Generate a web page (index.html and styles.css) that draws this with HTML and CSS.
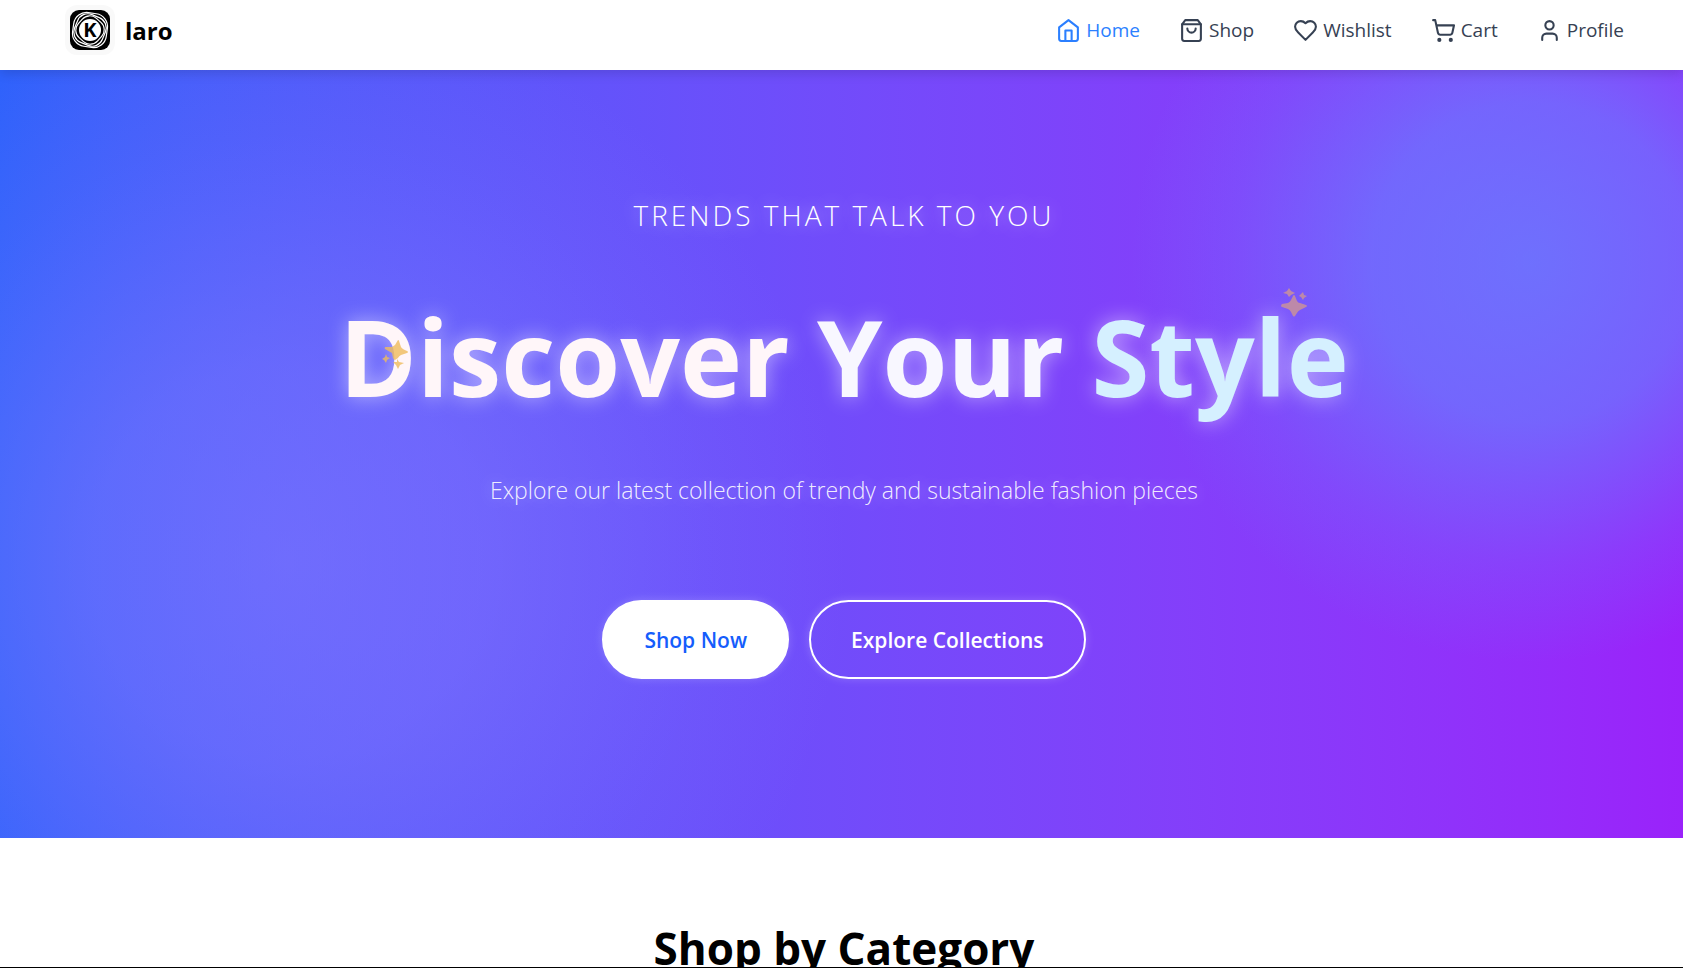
FILE: index.html
```html
<!doctype html>
<html lang="en">
<head>
	<meta charset="UTF-8">
	<meta name="viewport" content="width=device-width, initial-scale=1">
	<title>Klaro</title>
	<link rel="stylesheet" href="styles.css">
</head>
<body>
	<div class="page">
		<header class="navbar">
			<a href="#" class="brand">
				<span class="logo">
					<svg viewBox="0 0 40 40" width="40" height="40" aria-hidden="true">
						<rect width="40" height="40" rx="9" fill="#000"/>
						<g fill="none" stroke="#fff" stroke-width="1.2">
							<rect x="3" y="3" width="34" height="34" rx="13" transform="rotate(8 20 20)"/>
							<rect x="5" y="5" width="30" height="30" rx="11" transform="rotate(22 20 20)"/>
							<rect x="7" y="7" width="26" height="26" rx="10" transform="rotate(42 20 20)"/>
						</g>
						<circle cx="20" cy="20" r="11" fill="#fff"/>
						<text x="20" y="27" text-anchor="middle" class="logo-letter">K</text>
					</svg>
				</span>
				<span class="brand-name">laro</span>
			</a>
			<nav class="nav-links">
				<a href="#" class="active">
					<svg class="icon" viewBox="0 0 24 24"><path d="M3 9l9-7 9 7v11a2 2 0 0 1-2 2H5a2 2 0 0 1-2-2z"/><path d="M9 22V12h6v10"/></svg>
					<span>Home</span>
				</a>
				<a href="#">
					<svg class="icon" viewBox="0 0 24 24"><path d="M6 2 3 6v14a2 2 0 0 0 2 2h14a2 2 0 0 0 2-2V6l-3-4Z"/><path d="M3 6h18"/><path d="M16 10a4 4 0 0 1-8 0"/></svg>
					<span>Shop</span>
				</a>
				<a href="#">
					<svg class="icon" viewBox="0 0 24 24"><path d="M19 14c1.490-1.460 3-3.210 3-5.500A5.500 5.500 0 0 0 16.500 3c-1.760 0-3 .5-4.500 2-1.500-1.500-2.740-2-4.500-2A5.500 5.500 0 0 0 2 8.500c0 2.300 1.500 4.050 3 5.500l7 7Z"/></svg>
					<span>Wishlist</span>
				</a>
				<a href="#">
					<svg class="icon" viewBox="0 0 24 24"><circle cx="8" cy="21" r="1"/><circle cx="19" cy="21" r="1"/><path d="M2.050 2.050h2l2.660 12.420a2 2 0 0 0 2 1.580h9.780a2 2 0 0 0 1.950-1.570l1.650-7.430H5.120"/></svg>
					<span>Cart</span>
				</a>
				<a href="#">
					<svg class="icon" viewBox="0 0 24 24"><path d="M19 21v-2a4 4 0 0 0-4-4H9a4 4 0 0 0-4 4v2"/><circle cx="12" cy="7" r="4"/></svg>
					<span>Profile</span>
				</a>
			</nav>
		</header>

		<section class="hero">
			<p class="tagline">Trends that talk to you</p>
			<h1 class="title">
				<span class="word-one">Discover</span>
				<span class="word-two">Your</span>
				<span class="word-three">Style</span>
				<svg class="sparkle sparkle-left" viewBox="0 0 26 28"><path d="M16 0q1 0 1 1l2 6q1 2 6 4 2 1 0 2l-6 2q-2 1-3 3l-3 2q-1 0-2-2l-1-5-7-4q-1-2 1-2l6 0 3-2z"/><path d="M4 14l1 3 3 1-3 2-1 3-2-3-2-1 3-2z"/><path d="M15 19l2 3 5 1-4 2-2 4-2-4-3-3 4 0z"/></svg>
				<svg class="sparkle sparkle-right" viewBox="0 0 26 28"><path d="M12 8q1-2 2 0l2 5q1 2 3 2l6 2q2 1 0 2l-6 3q-2 1-3 3l-2 3q-1 1-2 0l-2-4q-1-2-3-3l-6-2q-2-1 0-3l6-1q2-1 3-3z"/><path d="M8 0l2 3 4 2-4 2-2 2-2-3-4-1 4-2z"/><path d="M22 4l1 3 3 1-3 2-1 2-2-3-2-1 2-2z"/></svg>
			</h1>
			<p class="subtitle">Explore our latest collection of trendy and sustainable fashion pieces</p>
			<div class="actions">
				<button type="button" class="btn btn-primary">Shop Now</button>
				<button type="button" class="btn btn-outline">Explore Collections</button>
			</div>
		</section>

		<section class="categories">
			<h2>Shop by Category</h2>
		</section>
	</div>
</body>
</html>
```

FILE: styles.css
```css
*{
	margin:0;
	padding:0;
	box-sizing:border-box;
}
body{
	font-family:"Open Sans", "Noto Sans", sans-serif;
	background:#fff;
	color:#000;
}
.page{
	height:100vh;
	overflow:hidden;
	border-bottom:1px solid #000;
}

/* navbar */
.navbar{
	position:relative;
	z-index:2;
	display:flex;
	justify-content:space-between;
	align-items:center;
	padding:5px 59px 15px 65px;
	background:#fff;
	box-shadow:0 4px 10px rgba(0, 0, 0, 0.12);
}
.brand{
	display:flex;
	align-items:center;
	gap:10px;
	color:#000;
	text-decoration:none;
}
.logo{
	display:flex;
	padding:5px;
	border-radius:12px;
	background:#f9f9f9;
}
.logo-letter{
	font-size:20px;
	font-weight:700;
}
.brand-name{
	font-size:24px;
	font-weight:700;
}
.nav-links{
	display:flex;
	gap:39px;
}
.nav-links a{
	display:flex;
	align-items:center;
	gap:5px;
	font-size:19px;
	color:#364153;
	text-decoration:none;
}
.nav-links a.active{
	color:#2b7fff;
}
.icon{
	width:25px;
	height:25px;
	fill:none;
	stroke:currentColor;
	stroke-width:2;
	stroke-linecap:round;
	stroke-linejoin:round;
}

/* hero */
.hero{
	display:flex;
	flex-direction:column;
	align-items:center;
	padding:124px 0 159px 5px;
	text-align:center;
	color:#fff;
	background:
		radial-gradient(circle 400px at 91% 25%, rgba(95, 140, 255, 0.7), rgba(95, 140, 255, 0.58) 40%, rgba(95, 140, 255, 0.2) 75%, rgba(95, 140, 255, 0) 100%),
		radial-gradient(circle 560px at 17% 64%, rgba(145, 125, 255, 0.5), rgba(145, 125, 255, 0.4) 35%, rgba(145, 125, 255, 0.13) 75%, rgba(145, 125, 255, 0) 100%),
		linear-gradient(to right in oklab, #2f62fb, #9a22fa);
}
.tagline{
	font-size:28px;
	line-height:42px;
	font-weight:300;
	letter-spacing:3px;
	text-transform:uppercase;
	text-shadow:0 0 15px rgba(255, 255, 255, 0.5);
}
.title{
	position:relative;
	margin-top:46px;
	font-size:105px;
	line-height:150px;
	font-weight:700;
	text-shadow:0 0 20px rgba(255, 255, 255, 0.5);
}
.word-one{
	color:#fff6f9;
}
.word-two{
	color:#f8f7ff;
}
.word-three{
	color:#d5f0ff;
}
.sparkle{
	position:absolute;
	width:26px;
	height:28px;
	overflow:visible;
}
.sparkle-left{
	left:43px;
	top:58px;
	fill:#f0bc5c;
	opacity:0.8;
}
.sparkle-right{
	right:42px;
	top:6px;
	fill:#c9929b;
	opacity:0.85;
}
.subtitle{
	margin-top:40px;
	font-size:23px;
	line-height:36px;
	font-weight:300;
	color:rgba(255, 255, 255, 0.9);
	text-shadow:0 0 15px rgba(255, 255, 255, 0.4);
}
.actions{
	display:flex;
	gap:20px;
	margin-top:92px;
}
.btn{
	height:79px;
	padding:0 40px;
	border:2px solid #fff;
	border-radius:40px;
	font-family:inherit;
	font-size:21px;
	font-weight:600;
	box-shadow:0 0 10px rgba(255, 255, 255, 0.2);
}
.btn-primary{
	background:#fff;
	color:#155dfc;
}
.btn-outline{
	background:transparent;
	color:#fff;
}

/* categories */
.categories{
	padding:79px 0 0 5px;
	text-align:center;
}
.categories h2{
	font-size:44px;
	line-height:62px;
	font-weight:700;
}
```
